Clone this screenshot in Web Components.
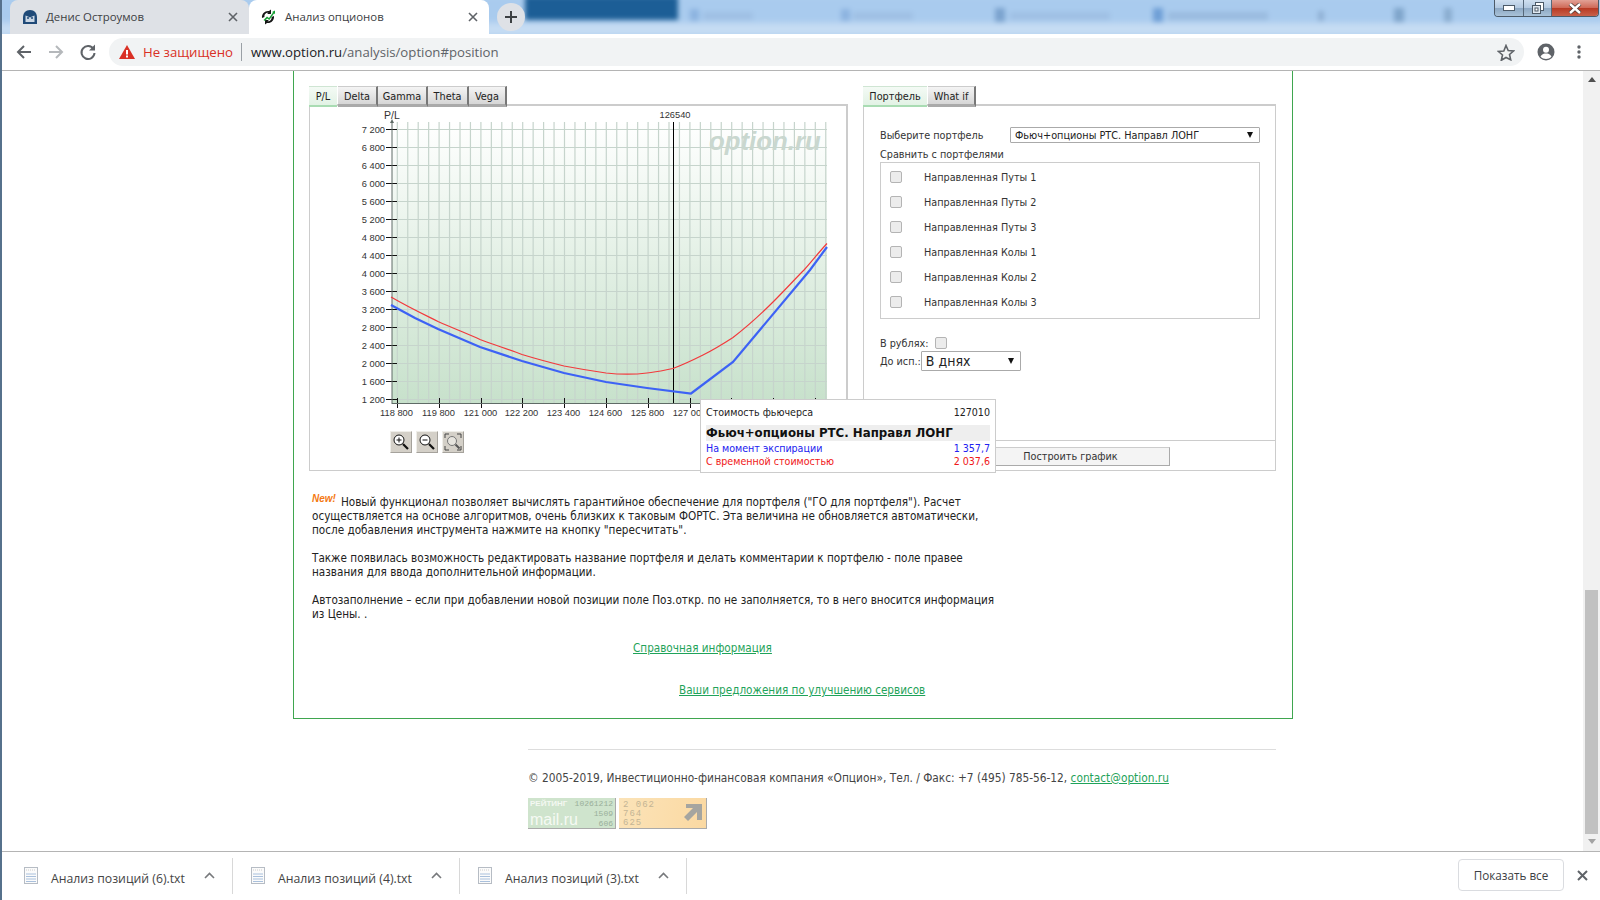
<!DOCTYPE html>
<html lang="ru">
<head>
<meta charset="utf-8">
<title>Анализ опционов</title>
<style>
  html, body { margin: 0; height: 100%; overflow: hidden; background: #fff; }
  body { font-family: "DejaVu Sans Condensed", "DejaVu Sans", sans-serif; font-size: 11.64px; color: #222; }
</style>
</head>
<body>
<browser-window>
  <tab-strip></tab-strip>
  <address-bar></address-bar>
  <page-view>
    <analysis-box>
      <div slot="left">
        <flat-tabs labels="P/L,Delta,Gamma,Theta,Vega" widths="28,40,50,41,38"></flat-tabs>
        <chart-panel></chart-panel>
      </div>
      <div slot="right">
        <flat-tabs labels="Портфель,What if" widths="64,48"></flat-tabs>
        <portfolio-panel></portfolio-panel>
      </div>
      <chart-tooltip slot="tooltip"></chart-tooltip>
      <info-notes slot="notes"></info-notes>
    </analysis-box>
    <site-footer></site-footer>
  </page-view>
  <download-bar></download-bar>
</browser-window>

<script>
function makeRoot(el, html) {
    const root = el.attachShadow({mode: 'open'});
    const template = document.createElement('template');
    template.innerHTML = html;
    root.appendChild(template.content.cloneNode(true));
    return root;
}

const UI_FONT = '"Open Sans", "Noto Sans", sans-serif';

class BrowserWindow extends HTMLElement {
    constructor () {
        super();
        makeRoot(this, `
          <style>
            :host { display: flex; flex-direction: column; width: 1600px; height: 900px; box-sizing: border-box; border-left: 2px solid #56718c; }
          </style>
          <slot></slot>`);
    }
}

class TabStrip extends HTMLElement {
    constructor () {
        super();
        const tab = (icon, text, active) => `
          <div class="tab ${active ? 'active' : ''}">
            ${icon}<span class="title">${text}</span>
            <svg class="close" width="10" height="10" viewBox="0 0 10 10"><path d="M1 1l8 8M9 1l-8 8" stroke="#5f6368" stroke-width="1.6"/></svg>
          </div>`;
        const owl = `<svg class="fav" width="16" height="16" viewBox="0 0 16 16"><path d="M8 1C3.6 1 1 4 1 8.500V15h14V8.500C15 4 12.400 1 8 1z" fill="#1f4a78"/><path d="M3.500 6.500 6 7.500l2 1 2-1 2.500-1v6.500h-9z" fill="#c9d6e4"/><circle cx="6" cy="9" r="1" fill="#1f4a78"/><circle cx="10" cy="9" r="1" fill="#1f4a78"/></svg>`;
        const arrows = `<svg class="fav" width="16" height="16" viewBox="0 0 16 16"><path d="M2 9C1.500 4.500 5 1.500 9 2l2-1.500V5H7l1.500-1.200C6 3.500 4 5.500 4.500 8z" fill="#161616"/><path d="M14 7c.5 4.500-3 7.500-7 7l-2 1.500V11h4l-1.500 1.200C10 12.500 12 10.500 11.500 8z" fill="#161616"/><path d="M3.500 11 7 7.500l2 1.500 4-5.500-1-.5 3-1.500v3.500l-1-.6L9.300 11 7.200 9.500 5 12z" fill="#16a035"/></svg>`;
        makeRoot(this, `
          <style>
            :host { display: flex; height: 34px; flex: none; position: relative; overflow: hidden; background: #b4d2f0; padding-left: 8px; font: 11.4px ${UI_FONT}; color: #3c4043; }
            .blur { position: absolute; inset: -4px -4px 0 -4px; filter: blur(2.5px);
              background:
                linear-gradient(#1c5e96, #1c5e96) 527px 0/153px 24px no-repeat,
                linear-gradient(#8cb3e0, #8cb3e0) 692px 13px/9px 12px no-repeat,
                linear-gradient(#9fc0e4, #9fc0e4) 705px 16px/50px 8px no-repeat,
                linear-gradient(#8cb3e0, #8cb3e0) 843px 13px/9px 12px no-repeat,
                linear-gradient(#9fc0e4, #9fc0e4) 855px 16px/60px 8px no-repeat,
                linear-gradient(#7ba3ce, #7ba3ce) 997px 12px/10px 14px no-repeat,
                linear-gradient(#9fc0e4, #9fc0e4) 1012px 16px/100px 8px no-repeat,
                linear-gradient(#6f9fd6, #6f9fd6) 1155px 12px/10px 14px no-repeat,
                linear-gradient(#9abbdf, #9abbdf) 1170px 16px/100px 8px no-repeat,
                linear-gradient(#8fb0d4, #8fb0d4) 1320px 15px/6px 10px no-repeat,
                linear-gradient(#7fa5cb, #7fa5cb) 1396px 12px/10px 14px no-repeat,
                linear-gradient(#8aadd0, #8aadd0) 1446px 12px/8px 14px no-repeat,
                linear-gradient(#a9cbee 0, #a9cbee 24px, #c6dcf3 30px, #c6dcf3 100%);
            }
            .tab { position: relative; width: 239px; height: 34px; box-sizing: border-box; display: flex; align-items: center; padding: 0 11px 0 12px; background: #dee1e6; border-radius: 8px 8px 0 0; }
            .tab.active { background: #fff; width: 240px; padding-left: 11px; }
            .fav { flex: none; }
            .title { flex: 1; margin-left: 8px; margin-top: -1px; white-space: nowrap; }
            .active .title { margin-left: 9px; }
            .plus { position: relative; width: 28px; height: 28px; margin: 3px 0 0 8px; border-radius: 50%; background: #dee1e6; display: flex; align-items: center; justify-content: center; }
            .win { position: absolute; right: 1px; top: 0; display: flex; height: 17px; width: 105px; box-sizing: border-box; border: 1px solid #4c5a68; border-top: 0; border-radius: 0 0 4px 4px; overflow: hidden; }
            .win div { display: flex; align-items: center; justify-content: center; background: linear-gradient(#cfdff0, #b3c9e0 48%, #8da8c4 52%, #a9c2d8); border-right: 1px solid #56687a; }
            .win .min { width: 28px; } .win .max { width: 27px; }
            .win .cls { flex: 1; border: 0; background: linear-gradient(#e2a196, #cf6a58 48%, #b83a24 52%, #c8604a); }
          </style>
          <div class="blur"></div>
          ${tab(owl, 'Денис Остроумов', false)}
          ${tab(arrows, 'Анализ опционов', true)}
          <div class="plus"><svg width="14" height="14" viewBox="0 0 14 14"><path d="M7 1v12M1 7h12" stroke="#3c4043" stroke-width="2"/></svg></div>
          <div class="win">
            <div class="min"><svg width="12" height="6" viewBox="0 0 12 6"><rect x=".5" y=".5" width="11" height="5" fill="#fff" stroke="#4c5a68"/></svg></div>
            <div class="max"><svg width="12" height="12" viewBox="0 0 12 12"><rect x="3.500" y=".5" width="8" height="8" fill="#fff" stroke="#4c5a68"/><rect x=".5" y="3.500" width="8" height="8" fill="#dfe8f1" stroke="#4c5a68"/><rect x="3" y="6" width="3" height="3" fill="#fff" stroke="#4c5a68"/></svg></div>
            <div class="cls"><svg width="14" height="11" viewBox="0 0 14 11"><path d="M2 1l10 9M12 1L2 10" stroke="#4c3a36" stroke-width="4"/><path d="M2 1l10 9M12 1L2 10" stroke="#fff" stroke-width="2.400"/></svg></div>
          </div>`);
    }
}

class AddressBar extends HTMLElement {
    constructor () {
        super();
        makeRoot(this, `
          <style>
            :host { display: flex; align-items: center; flex: none; height: 37px; box-sizing: border-box; border-bottom: 1px solid #b4b4b4; background: #fff; padding: 0 0 0 13px; font: 13.2px ${UI_FONT}; }
            .nav { flex: none; }
            .omni { flex: none; width: 1415px; height: 28px; box-sizing: border-box; margin-left: 12px; display: flex; align-items: center; background: #f1f3f4; border-radius: 14px; padding: 0 9px 0 10px; }
            .warn { color: #d93025; margin-left: 8px; white-space: nowrap; }
            .sep { width: 1px; height: 18px; background: #9aa0a6; margin: 0 9px 0 8px; }
            .url { flex: 1; color: #5f6368; white-space: nowrap; }
            .url b { font-weight: 400; color: #202124; }
          </style>
          <svg class="nav" width="18" height="16" viewBox="0 0 18 16"><path d="M16 8H3M9 2 3 8l6 6" fill="none" stroke="#5f6368" stroke-width="2"/></svg>
          <svg class="nav" style="margin-left:14px" width="18" height="16" viewBox="0 0 18 16"><path d="M2 8h13M9 2l6 6-6 6" fill="none" stroke="#b5b8bb" stroke-width="2"/></svg>
          <svg class="nav" style="margin-left:14px" width="18" height="18" viewBox="0 0 18 18"><path d="M14.500 6A6.500 6.500 0 1 0 15.500 10" fill="none" stroke="#5f6368" stroke-width="2"/><path d="M16 1.500V7.500H10z" fill="#5f6368"/></svg>
          <div class="omni">
            <svg width="16" height="14" viewBox="0 0 16 14"><path d="M8 0 16 14H0z" fill="#d93025"/><path d="M7 5h2v4.500H7zM7 10.500h2v2H7z" fill="#fff"/></svg>
            <span class="warn">Не защищено</span><span class="sep"></span>
            <span class="url"><b>www.option.ru</b>/analysis/option#position</span>
            <svg width="18" height="17" viewBox="0 0 18 17"><path d="M9 1.500l2.200 5 5.300.5-4 3.500 1.200 5.300L9 13.500l-4.700 2.800 1.200-5.300-4-3.500 5.300-.5z" fill="none" stroke="#5f6368" stroke-width="1.600"/></svg>
          </div>
          <svg style="margin-left:13px" width="18" height="18" viewBox="0 0 18 18"><circle cx="9" cy="9" r="8.500" fill="#5f6368"/><circle cx="9" cy="6.800" r="3" fill="#fff"/><path d="M3.500 13.500c1.500-2.500 3.500-3 5.500-3s4 .5 5.500 3c-1.500 1.800-3.500 2.500-5.500 2.500s-4-.7-5.500-2.500z" fill="#fff"/></svg>
          <svg style="margin-left:22px" width="4" height="16" viewBox="0 0 4 16"><circle cx="2" cy="3" r="1.700" fill="#5f6368"/><circle cx="2" cy="8" r="1.700" fill="#5f6368"/><circle cx="2" cy="13" r="1.700" fill="#5f6368"/></svg>`);
    }
}

class PageView extends HTMLElement {
    constructor () {
        super();
        makeRoot(this, `
          <style>
            :host { display: flex; flex: 1; min-height: 0; overflow: hidden; }
            .content { flex: 1; min-width: 0; padding-left: 291px; }
            .bar { flex: none; width: 17px; background: #f1f1f1; display: flex; flex-direction: column; align-items: center; }
            .up { width: 0; height: 0; margin-top: 6px; border: 4px solid transparent; border-top: 0; border-bottom: 5px solid #505050; }
            .thumb { width: 13px; height: 244px; margin-top: 508px; background: #c1c1c1; }
            .down { width: 0; height: 0; margin-top: 5px; border: 4px solid transparent; border-bottom: 0; border-top: 5px solid #a3a3a3; }
          </style>
          <div class="content"><slot></slot></div>
          <div class="bar"><div class="up"></div><div class="thumb"></div><div class="down"></div></div>`);
    }
}

class AnalysisBox extends HTMLElement {
    constructor () {
        super();
        makeRoot(this, `
          <style>
            :host { display: block; position: relative; width: 1000px; box-sizing: border-box; border: 1px solid #3fa64f; border-top: 0; padding: 15px 15px 0 15px; }
            .cols { display: grid; grid-template-columns: 539px 413px; column-gap: 15px; }
            ::slotted(chart-tooltip) { position: absolute; left: 406px; top: 328px; }
          </style>
          <div class="cols"><slot name="left"></slot><slot name="right"></slot></div>
          <slot name="tooltip"></slot>
          <slot name="notes"></slot>`);
    }
}

class FlatTabs extends HTMLElement {
    constructor () {
        super();
        const labels = this.getAttribute('labels').split(',');
        const widths = this.getAttribute('widths').split(',');
        const items = labels.map((label, index) =>
            `<div class="t ${index === 0 ? 'on' : ''}" style="width:${widths[index]}px">${label}</div>`).join('');
        makeRoot(this, `
          <style>
            :host { display: flex; height: 18px; position: relative; z-index: 1; }
            .t { height: 21px; box-sizing: border-box; line-height: 20px; text-align: center; font-size: 10.8px; color: #222; background: linear-gradient(#f4f4f4, #d6d6d6); border-top: 1px solid #ccc; border-right: 2px solid #777; border-bottom: 3px solid #aaa; }
            .t.on { background: linear-gradient(#f4faf5, #e2f2e5); border: 0; border-top: 1px solid #cfe5d3; border-bottom: 2px solid #a9dcb3; margin-right: 1px; }
          </style>
          ${items}`);
    }
}

class ChartPanel extends HTMLElement {
    constructor () {
        super();
        // page coordinates are kept in the viewBox, so the numbers read off the screenshot
        const yLabels = ['7 200','6 800','6 400','6 000','5 600','5 200','4 800','4 400','4 000','3 600','3 200','2 800','2 400','2 000','1 600','1 200'];
        const xLabels = ['118 800','119 800','121 000','122 200','123 400','124 600','125 800','127 000'];
        let s = '';
        for (let x = 397.3 - 10.45; x < 827; x += 10.45) {
            if (x > 392) s += `<line x1="${x}" x2="${x}" y1="122" y2="403" stroke="#c6d4cc" stroke-width="1.200"/>`;
        }
        yLabels.forEach((label, i) => {
            const y = 129.5 + i * 18;
            s += `<line x1="392" x2="827" y1="${y}" y2="${y}" stroke="#c6d4cc" stroke-width="1.200"/>`;
            s += `<line x1="386" x2="397" y1="${y}" y2="${y}" stroke="#111"/>`;
            s += `<text x="385" y="${y + 3.5}" text-anchor="end">${label}</text>`;
        });
        for (let i = 0; i < 11; i++) {
            const x = Math.round(397 + i * 41.8) + 0.5;
            s += `<line x1="${x}" x2="${x}" y1="398" y2="408" stroke="#111"/>`;
            if (xLabels[i]) s += `<text x="${x - 1}" y="416" text-anchor="middle">${xLabels[i]}</text>`;
        }
        const blue = 'M391 305 L415 318 L438 329 L480 347 L522 361 L564 373 L606 382 L647 388 L691 393.500 L733 362 L810 270 L827 247';
        const red = 'M391 297 C410 308 425 315 438 321.500 C455 329 468 334 480 339.500 C495 345 510 350 522 354.500 C540 360 552 363 564 366 C580 369 592 371 606 373 C620 374.500 635 374.500 647 373 C657 372 665 370 673 368.500 C685 364 695 359 703 355 C713 350 723 344 733 337.500 C748 326 762 313 773 302 C785 290 795 279 804 270 C812 261 820 251 827 243.500';
        makeRoot(this, `
          <style>
            :host { display: block; height: 367px; box-sizing: border-box; border: 1px solid #ccc; border-width: 2px 2px 1px 1px; background: #fff; }
            svg { display: block; }
            text { font: 9.300px "Liberation Sans", sans-serif; fill: #333; }
            .mark { font: italic bold 25.800px "Liberation Sans", sans-serif; fill: #c9d7cf; }
            .tools { display: flex; gap: 4px; padding: 5px 0 0 80px; }
            .tools div { width: 22px; height: 22px; box-sizing: border-box; background: #d4d0c8; border: 1px solid; border-color: #efeee9 #a5a29c #a5a29c #efeee9; display: flex; align-items: center; justify-content: center; }
          </style>
          <svg width="536" height="320" viewBox="310 106 536 320">
            <defs><linearGradient id="bg" x1="0" y1="0" x2="0" y2="1"><stop offset="0" stop-color="#fff"/><stop offset="1" stop-color="#c7e1cb"/></linearGradient></defs>
            <text x="392" y="119" text-anchor="middle" style="font-size:10.500px">P/L</text>
            <text x="675" y="118" text-anchor="middle">126540</text>
            <rect x="392" y="122" width="435" height="281" fill="url(#bg)"/>
            ${s}
            <text class="mark" x="709" y="150">option.ru</text>
            <line x1="392" x2="392" y1="122" y2="404" stroke="#5f6b66" stroke-width="1"/>
            <line x1="392" x2="827" y1="403.500" y2="403.500" stroke="#5f6b66"/>
            <path d="M392 119l-2 4h4z" fill="#5f6b66"/>
            <line x1="673.500" x2="673.500" y1="122" y2="403" stroke="#000"/>
            <path d="${blue}" fill="none" stroke="#3d62f5" stroke-width="2.200"/>
            <path d="${red}" fill="none" stroke="#f2393c" stroke-width="1.200"/>
          </svg>
          <div class="tools">
            <div><svg width="18" height="18" viewBox="0 0 18 18"><circle cx="7" cy="7" r="5" fill="#fff" stroke="#111"/><path d="M4.500 7h5M7 4.500v5" stroke="#111"/><path d="M11 11l5 5" stroke="#111" stroke-width="2.200"/></svg></div>
            <div><svg width="18" height="18" viewBox="0 0 18 18"><circle cx="7" cy="7" r="5" fill="#fff" stroke="#111"/><path d="M4.500 7h5" stroke="#111"/><path d="M11 11l5 5" stroke="#111" stroke-width="2.200"/></svg></div>
            <div><svg width="18" height="18" viewBox="0 0 18 18"><path d="M1 5V1h4M13 1h4v4M17 13v4h-4M5 17H1v-4" fill="none" stroke="#444"/><circle cx="8" cy="8" r="4.500" fill="#e6e4de" stroke="#777"/><path d="M11.500 11.500l4 4" stroke="#555" stroke-width="2"/></svg></div>
          </div>`);
    }
}

class CheckRow extends HTMLElement {
    constructor () {
        super();
        makeRoot(this, `
          <style>
            :host { display: flex; align-items: center; height: 25px; padding-left: 9px; }
            .box { width: 12px; height: 12px; box-sizing: border-box; border: 1px solid #b4b4b4; border-radius: 2px; background: #ececec; flex: none; margin-right: 22px; margin-top: -1px; }
          </style>
          <span class="box"></span><slot></slot>`);
    }
}

class DropSelect extends HTMLElement {
    constructor () {
        super();
        makeRoot(this, `
          <style>
            :host { display: flex; align-items: center; justify-content: space-between; box-sizing: border-box; border: 1px solid #aaa; border-radius: 1px; padding: 0 6px 0 4px; background: #fff; color: #222; }
            .arrow { width: 0; height: 0; border: 3.500px solid transparent; border-bottom: 0; border-top: 6px solid #111; }
          </style>
          <slot></slot><span class="arrow"></span>`);
    }
}

class PortfolioPanel extends HTMLElement {
    constructor () {
        super();
        const names = ['Направленная Путы 1','Направленная Путы 2','Направленная Путы 3','Направленная Колы 1','Направленная Колы 2','Направленная Колы 3'];
        makeRoot(this, `
          <style>
            :host { display: flex; flex-direction: column; height: 367px; box-sizing: border-box; border: 1px solid #ccc; border-top-width: 2px; background: #fff; font-size: 10.750px; color: #333; }
            .body { flex: 1; padding: 21px 15px 0 16px; }
            .row { display: flex; align-items: center; justify-content: space-between; height: 16px; }
            .row drop-select { width: 250px; height: 16px; font-size: 10.800px; }
            .cap { line-height: 15px; margin-top: 4px; height: 15px; }
            .list { border: 1px solid #ccc; height: 157px; box-sizing: border-box; padding: 2px 0 0 0; }
            .rub { display: flex; align-items: center; margin-top: 16px; height: 16px; }
            .rub .box { width: 12px; height: 12px; box-sizing: border-box; border: 1px solid #b4b4b4; border-radius: 2px; background: #ececec; margin-left: 6px; }
            .days { display: flex; align-items: center; height: 20px; margin-top: 0; }
            .days drop-select { width: 100px; height: 20px; font-size: 14px; margin-left: 0; }
            .foot { flex: none; height: 30px; box-sizing: border-box; border-top: 1px solid #ccc; padding-top: 6px; display: flex; }
            .btn { margin-left: 107px; width: 199px; height: 19px; box-sizing: border-box; border: 1px solid #ccc; border-bottom-color: #aaa; border-right-color: #aaa; background: #f4f4f4; text-align: center; line-height: 18px; }
          </style>
          <div class="body">
            <div class="row"><span>Выберите портфель</span><drop-select>Фьюч+опционы РТС. Направл ЛОНГ</drop-select></div>
            <div class="cap">Сравнить с портфелями</div>
            <div class="list">${names.map(n => `<check-row>${n}</check-row>`).join('')}</div>
            <div class="rub">В рублях:<span class="box"></span></div>
            <div class="days">До исп.:<drop-select>В днях</drop-select></div>
          </div>
          <div class="foot"><div class="btn">Построить график</div></div>`);
    }
}

class ChartTooltip extends HTMLElement {
    constructor () {
        super();
        makeRoot(this, `
          <style>
            :host { display: block; width: 296px; height: 74px; box-sizing: border-box; border: 1px solid #ccc; background: #fff; padding: 6px 5px 0 5px; font-size: 10.600px; color: #222; z-index: 2; }
            .r { display: flex; justify-content: space-between; height: 13px; line-height: 13px; }
            .head { height: 16px; margin: 6px 0 1px; background: #eee; font: bold 11.800px/16px "DejaVu Sans", sans-serif; color: #111; white-space: nowrap; }
            .blue { color: #2222f0; } .red { color: #f01818; }
          </style>
          <div class="r"><span>Стоимость фьючерса</span><span>127010</span></div>
          <div class="head">Фьюч+опционы РТС. Направл ЛОНГ</div>
          <div class="r blue"><span>На момент экспирации</span><span>1 357,7</span></div>
          <div class="r red"><span>С временной стоимостью</span><span>2 037,6</span></div>`);
    }
}

class InfoNotes extends HTMLElement {
    constructor () {
        super();
        makeRoot(this, `
          <style>
            :host { display: block; padding: 24px 0 21px 3px; line-height: 14px; color: #222; }
            .new { color: #f47a14; font: italic bold 10px "Liberation Sans", sans-serif; position: relative; top: -4px; margin-right: 5px; }
            p { margin: 0 0 14px; white-space: nowrap; }
            a { display: block; width: max-content; color: #1fa35a; text-decoration: underline; }
            .a1 { margin: 20px 0 0 321px; }
            .a2 { margin: 28px 0 0 367px; }
          </style>
          <p><span class="new">New!</span>Новый функционал позволяет вычислять гарантийное обеспечение для портфеля ("ГО для портфеля"). Расчет<br>осуществляется на основе алгоритмов, очень близких к таковым ФОРТС. Эта величина не обновляется автоматически,<br>после добавления инструмента нажмите на кнопку "пересчитать".</p>
          <p>Также появилась возможность редактировать название портфеля и делать комментарии к портфелю - поле правее<br>названия для ввода дополнительной информации.</p>
          <p style="margin:0">Автозаполнение – если при добавлении новой позиции поле Поз.откр. по не заполняется, то в него вносится информация<br>из Цены. .</p>
          <a class="a1">Справочная информация</a>
          <a class="a2">Ваши предложения по улучшению сервисов</a>`);
    }
}

class SiteFooter extends HTMLElement {
    constructor () {
        super();
        makeRoot(this, `
          <style>
            :host { display: block; width: 748px; margin: 30px 0 0 235px; border-top: 1px solid #ddd; padding-top: 21px; color: #444; line-height: 14px; font-size: 11.800px; }
            a { color: #1fa35a; text-decoration: underline; }
            .badges { display: flex; gap: 3px; margin-top: 13px; }
            .b { position: relative; width: 88px; height: 31px; box-sizing: border-box; font: 8px/10px "Liberation Mono", monospace; border-bottom: 1px solid #aaa; border-right: 1px solid #aaa; overflow: hidden; }
            .mail { background: #cfe4cd; color: #9aaf9a; padding: 1px 2px; }
            .mail .top { display: flex; justify-content: space-between; }
            .mail .rt { color: #f4f8f2; font: bold 8px/10px "Liberation Sans", sans-serif; }
            .mail .ml { position: absolute; left: 2px; bottom: 1px; color: #f6faf4; font: 16px/15px "Liberation Sans", sans-serif; }
            .mail .nm { position: absolute; right: 2px; top: 11px; text-align: right; }
            .rate { background: linear-gradient(100deg, #fbe3b8, #fbd9a2); color: #c4b595; padding: 3px 4px; font-size: 9px; line-height: 9px; letter-spacing: 1px; }
            .rate svg { position: absolute; right: 3px; top: 4px; }
          </style>
          <div>© 2005-2019, Инвестиционно-финансовая компания «Опцион», Тел. / Факс: +7 (495) 785-56-12, <a>contact@option.ru</a></div>
          <div class="badges">
            <div class="b mail"><div class="top"><span class="rt">РЕЙТИНГ</span><span>10261212</span></div><div class="nm">1509<br>606</div><div class="ml">mail.ru</div></div>
            <div class="b rate">2 062<br>764<br>625<svg width="20" height="20" viewBox="0 0 20 20"><path d="M3 2h16v16h-5V10L5 19l-4-4 9-9H3z" fill="#a5a5a0"/></svg></div>
          </div>`);
    }
}

class DownloadItem extends HTMLElement {
    constructor () {
        super();
        makeRoot(this, `
          <style>
            :host { display: flex; width: 227px; height: 36px; box-sizing: border-box; border-right: 1px solid #d8d8d8; align-items: center; padding-left: 18px; font: 12.250px ${UI_FONT}; color: #444; }
            svg.file { margin-top: -2px; flex: none; }
            span { margin-left: 13px; margin-top: 5px; flex: 1; white-space: nowrap; }
            svg.up { margin: -2px 17px 0 0; flex: none; }
          </style>
          <svg class="file" width="14" height="17" viewBox="0 0 14 17"><rect x=".5" y=".5" width="13" height="16" fill="#fbfbfb" stroke="#b6bcc4"/><path d="M2 3h10" stroke="#ccc" stroke-dasharray="1 1"/><path d="M2 7h10M2 9.500h10M2 12h10M2 14.500h10" stroke="#a9c0dc"/></svg>
          <span><slot></slot></span>
          <svg class="up" width="11" height="7" viewBox="0 0 11 7"><path d="M1 6l4.500-4.500L10 6" fill="none" stroke="#77797c" stroke-width="1.600"/></svg>`);
    }
}

class DownloadBar extends HTMLElement {
    constructor () {
        super();
        makeRoot(this, `
          <style>
            :host { display: flex; flex: none; height: 49px; box-sizing: border-box; border-top: 1px solid #b4b4b4; background: #fff; align-items: center; font: 11.700px ${UI_FONT}; color: #3c4043; }
            .items { display: flex; flex: 1; padding-left: 4px; }
            .all { width: 106px; height: 32px; box-sizing: border-box; border: 1px solid #dadce0; border-radius: 4px; display: flex; align-items: center; justify-content: center; margin-top: -2px; padding-bottom: 1px; }
            svg { margin: -2px 12px 0 13px; }
          </style>
          <div class="items">
            <download-item>Анализ позиций (6).txt</download-item>
            <download-item>Анализ позиций (4).txt</download-item>
            <download-item>Анализ позиций (3).txt</download-item>
          </div>
          <div class="all">Показать все</div>
          <svg width="11" height="11" viewBox="0 0 11 11"><path d="M1 1l9 9M10 1l-9 9" stroke="#5f6368" stroke-width="2"/></svg>`);
    }
}

customElements.define('browser-window', BrowserWindow);
customElements.define('tab-strip', TabStrip);
customElements.define('address-bar', AddressBar);
customElements.define('page-view', PageView);
customElements.define('analysis-box', AnalysisBox);
customElements.define('flat-tabs', FlatTabs);
customElements.define('chart-panel', ChartPanel);
customElements.define('check-row', CheckRow);
customElements.define('drop-select', DropSelect);
customElements.define('portfolio-panel', PortfolioPanel);
customElements.define('chart-tooltip', ChartTooltip);
customElements.define('info-notes', InfoNotes);
customElements.define('site-footer', SiteFooter);
customElements.define('download-item', DownloadItem);
customElements.define('download-bar', DownloadBar);
</script>
</body>
</html>
